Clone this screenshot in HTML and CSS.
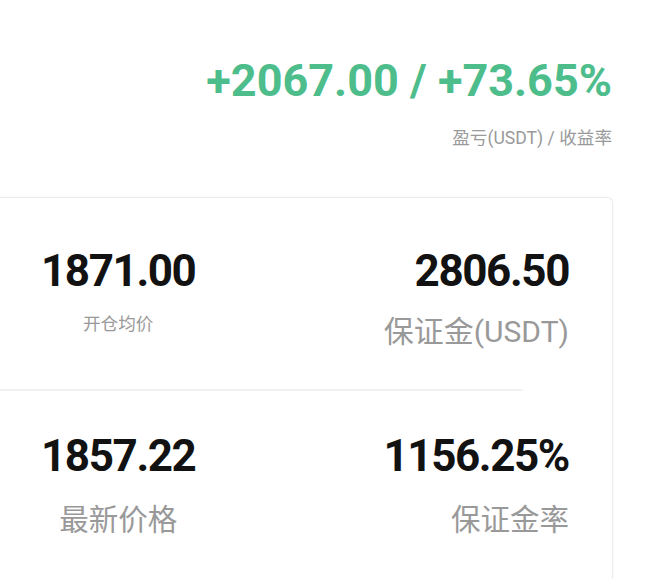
FILE: index.html
```html
<!DOCTYPE html>
<html lang="zh-CN">
<head>
<meta charset="utf-8">
<title>持仓</title>
<link rel="stylesheet" href="styles.css">
</head>
<body>
<div class="page">
  <header class="pnl">
    <div class="pnl-value">+2067.00 / +73.65%</div>
    <div class="pnl-label">盈亏(USDT) / 收益率</div>
  </header>
  <section class="card">
    <div class="row row-first">
      <div class="cell cell-left">
        <div class="num">1871.00</div>
        <div class="label label-small">开仓均价</div>
      </div>
      <div class="cell cell-right">
        <div class="num">2806.50</div>
        <div class="label label-large label-wide">保证金(USDT)</div>
      </div>
    </div>
    <div class="divider"></div>
    <div class="row row-second">
      <div class="cell cell-left">
        <div class="num">1857.22</div>
        <div class="label label-large label-low">最新价格</div>
      </div>
      <div class="cell cell-right">
        <div class="num">1156.25%</div>
        <div class="label label-large label-low">保证金率</div>
      </div>
    </div>
  </section>
</div>
</body>
</html>
```
FILE: styles.css
```css
* { box-sizing: border-box; }
html, body {
  margin: 0;
  padding: 0;
  background: #ffffff;
}
body {
  width: 655px;
  height: 579px;
  overflow: hidden;
  font-family: Roboto, "Noto Sans CJK SC", sans-serif;
}
.page {
  display: flex;
  flex-direction: column;
  height: 579px;
}
.pnl {
  display: flex;
  flex-direction: column;
  align-items: flex-end;
  padding-top: 55px;
  padding-right: 43px;
}
.pnl-value {
  font-size: 45px;
  line-height: 52px;
  font-weight: 700;
  color: #4dbd8b;
  white-space: nowrap;
}
.pnl-label {
  margin-top: 21px;
  font-size: 17.6px;
  line-height: 20px;
  color: #9a9a9a;
  white-space: nowrap;
}
.card {
  flex: 1;
  margin-top: 49px;
  margin-left: -20px;
  margin-right: 42px;
  border: 1px solid #ececec;
  border-bottom: none;
  border-radius: 6px 6px 0 0;
  box-shadow: 0 0 3px rgba(0, 0, 0, 0.05);
}
.row {
  display: flex;
  justify-content: space-between;
  align-items: flex-start;
  padding-left: 60px;
  padding-right: 43px;
}
.row-first {
  padding-top: 48px;
  height: 191px;
}
.row-second {
  padding-top: 40px;
}
.cell {
  display: flex;
  flex-direction: column;
}
.cell-left { align-items: center; }
.cell-right { align-items: flex-end; }
.num {
  font-size: 44px;
  line-height: 50px;
  font-weight: 700;
  letter-spacing: -1.4px;
  color: #121212;
  white-space: nowrap;
}
.label {
  color: #999999;
  white-space: nowrap;
}
.label-small {
  margin-top: 16px;
  font-size: 17.6px;
  line-height: 24px;
}
.label-large {
  margin-top: 18px;
  font-size: 29.5px;
  line-height: 36px;
}
.label-wide {
  font-size: 30px;
}
.label-low {
  margin-top: 21px;
}
.divider {
  height: 2px;
  background: #f1f1f1;
  margin-right: 89px;
}
```
